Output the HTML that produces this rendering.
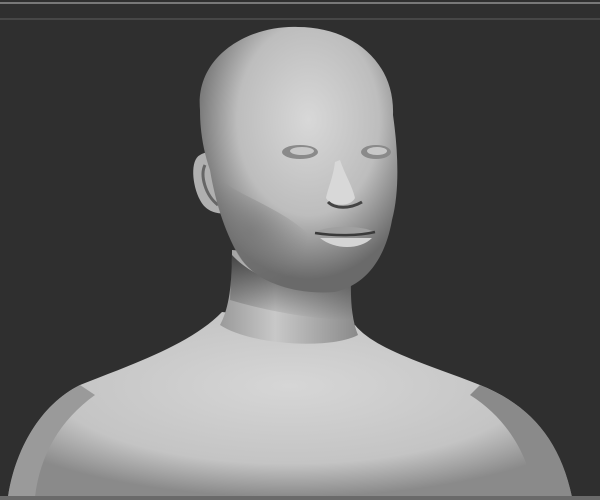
<!DOCTYPE html>
<html><head><style>
html,body{margin:0;padding:0;width:600px;height:500px;overflow:hidden;background:#303030}
</style></head><body>
<svg width="600" height="500" viewBox="0 0 600 500" xmlns="http://www.w3.org/2000/svg">
<defs>
<radialGradient id="body" cx="0.5" cy="0.4" r="0.6">
<stop offset="0" stop-color="#d6d6d6"/><stop offset="0.7" stop-color="#c4c4c4"/><stop offset="1" stop-color="#8a8a8a"/>
</radialGradient>
<radialGradient id="head" cx="0.55" cy="0.35" r="0.6">
<stop offset="0" stop-color="#d8d8d8"/><stop offset="0.6" stop-color="#bdbdbd"/><stop offset="1" stop-color="#6a6a6a"/>
</radialGradient>
<linearGradient id="neck" x1="0" y1="0" x2="1" y2="0">
<stop offset="0" stop-color="#9a9a9a"/><stop offset="0.4" stop-color="#c8c8c8"/><stop offset="1" stop-color="#8a8a8a"/>
</linearGradient>
<linearGradient id="nsh" x1="0" y1="0" x2="0" y2="1">
<stop offset="0" stop-color="#333" stop-opacity="0.85"/><stop offset="1" stop-color="#333" stop-opacity="0"/>
</linearGradient>
<radialGradient id="cheek" cx="0.3" cy="0.5" r="0.5">
<stop offset="0" stop-color="#777" stop-opacity="0.7"/><stop offset="1" stop-color="#777" stop-opacity="0"/>
</radialGradient>
</defs>
<rect x="0" y="0" width="600" height="500" fill="#2f2f2f"/>
<rect x="0" y="2" width="600" height="2" fill="#787878"/>
<rect x="0" y="18" width="600" height="2" fill="#474747"/>
<path d="M222,312 C190,345 130,365 80,385 C40,405 15,450 8,497 L572,497 C560,440 530,405 480,385 C430,365 375,350 355,325 Z" fill="url(#body)"/>
<path d="M8,497 C15,450 40,405 80,385 L95,395 C60,420 40,455 35,497Z" fill="#9a9a9a"/>
<path d="M572,497 C560,440 530,405 480,385 L470,395 C510,420 530,460 535,497Z" fill="#8a8a8a"/>
<path d="M232,250 C232,290 228,310 220,325 C250,345 330,350 358,335 C350,315 350,290 352,260 Z" fill="url(#neck)"/>
<path d="M232,255 C260,285 310,295 352,280 L352,320 C320,320 270,312 230,300Z" fill="url(#nsh)"/>
<path d="M200,155 C190,160 192,185 200,200 C205,210 215,215 228,213 L228,160 C220,150 208,150 200,155Z" fill="#b0b0b0"/>
<path d="M205,165 C200,175 205,195 218,205" stroke="#666" stroke-width="3" fill="none"/>
<path d="M200,110 C195,55 250,25 298,27 C350,27 395,60 393,115 C398,150 400,190 392,220 C385,260 365,285 335,292 C300,295 260,285 242,260 C225,235 215,200 210,170 C203,150 200,130 200,110Z" fill="url(#head)"/>
<path d="M215,175 C240,200 300,210 330,260 C335,280 330,290 320,292 C290,292 255,280 240,258 C225,235 218,200 215,175Z" fill="url(#cheek)"/>
<ellipse cx="300" cy="152" rx="18" ry="7" fill="#8a8a8a"/>
<ellipse cx="302" cy="151" rx="12" ry="4" fill="#c8c8c8"/>
<ellipse cx="376" cy="152" rx="15" ry="7" fill="#8a8a8a"/>
<ellipse cx="377" cy="151" rx="10" ry="4" fill="#c8c8c8"/>
<path d="M340,160 C345,175 352,185 355,198 C350,208 330,206 326,198 C328,188 333,178 335,162Z" fill="#d8d8d8"/>
<path d="M328,202 C335,209 350,209 362,202" stroke="#444" stroke-width="3" fill="none"/>
<path d="M315,232 C330,225 360,225 375,232 C360,238 330,238 315,232Z" fill="#a0a0a0"/>
<path d="M315,233 C335,236 358,236 375,232" stroke="#3a3a3a" stroke-width="2.5" fill="none"/>
<path d="M320,238 C335,250 360,250 372,238" fill="#d4d4d4"/>
<rect x="0" y="496" width="600" height="4" fill="#6a6a6a"/>
</svg>
</body></html>
